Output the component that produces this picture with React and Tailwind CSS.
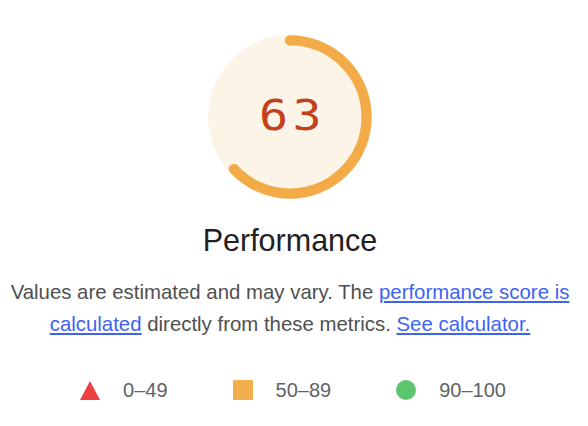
import React from 'react';

const score = 63;

const Gauge = ({ value }) => {
  const circumference = 2 * Math.PI * 56;
  const filled = (value / 100) * circumference;
  return (
    <div className="relative w-[164px] h-[164px]">
      <svg viewBox="0 0 120 120" className="w-full h-full">
        <circle cx="60" cy="60" r="56" fill="#fdf4e8" stroke="#fdf4e8" strokeWidth="8" />
        <circle
          cx="60"
          cy="60"
          r="56"
          fill="none"
          stroke="#f3ab48"
          strokeWidth="7.5"
          strokeLinecap="round"
          strokeDasharray={`${filled} ${circumference}`}
          transform="rotate(-90 60 60)"
        />
      </svg>
      <div className="absolute inset-0 flex items-center justify-center">
        <span className="text-[42px] leading-none tracking-[4px] pl-[4px] pb-[2px] scale-x-[1.15] text-[#c2411a] font-['DejaVu_Sans_Mono',monospace]">
          {value}
        </span>
      </div>
    </div>
  );
};

const LegendItem = ({ icon, label }) => (
  <div className="flex items-center gap-[23px]">
    {icon}
    <span className="text-[20px] leading-8 text-[#5f6368]">{label}</span>
  </div>
);

const App = () => {
  return (
    <div className="w-[588px] h-[426px] bg-white font-['Liberation_Sans',Arial,sans-serif] pr-2 pt-[35px] flex flex-col items-center">
      <Gauge value={score} />
      <h2 className="mt-[24px] text-[30.5px] leading-[34px] text-[#212121]">Performance</h2>
      <p className="mt-[19px] text-center text-[20.4px] leading-8 text-[#505050]">
        Values are estimated and may vary. The{' '}
        <a href="#" className="text-[#3d63f5] underline">performance score is calculated</a>{' '}
        directly from these metrics.{' '}
        <a href="#" className="text-[#3d63f5] underline">See calculator.</a>
      </p>
      <div className="mt-[34px] pl-[6px] flex items-center gap-[65px]">
        <LegendItem
          label="0–49"
          icon={
            <svg width="20" height="19" viewBox="0 0 20 19">
              <polygon points="10,0 20,19 0,19" fill="#ee4040" />
            </svg>
          }
        />
        <LegendItem
          label="50–89"
          icon={<div className="w-[20px] h-[20px] bg-[#f2ad4c]" />}
        />
        <LegendItem
          label="90–100"
          icon={<div className="w-[20px] h-[20px] rounded-full bg-[#5cc66f]" />}
        />
      </div>
    </div>
  );
};

export default App;
